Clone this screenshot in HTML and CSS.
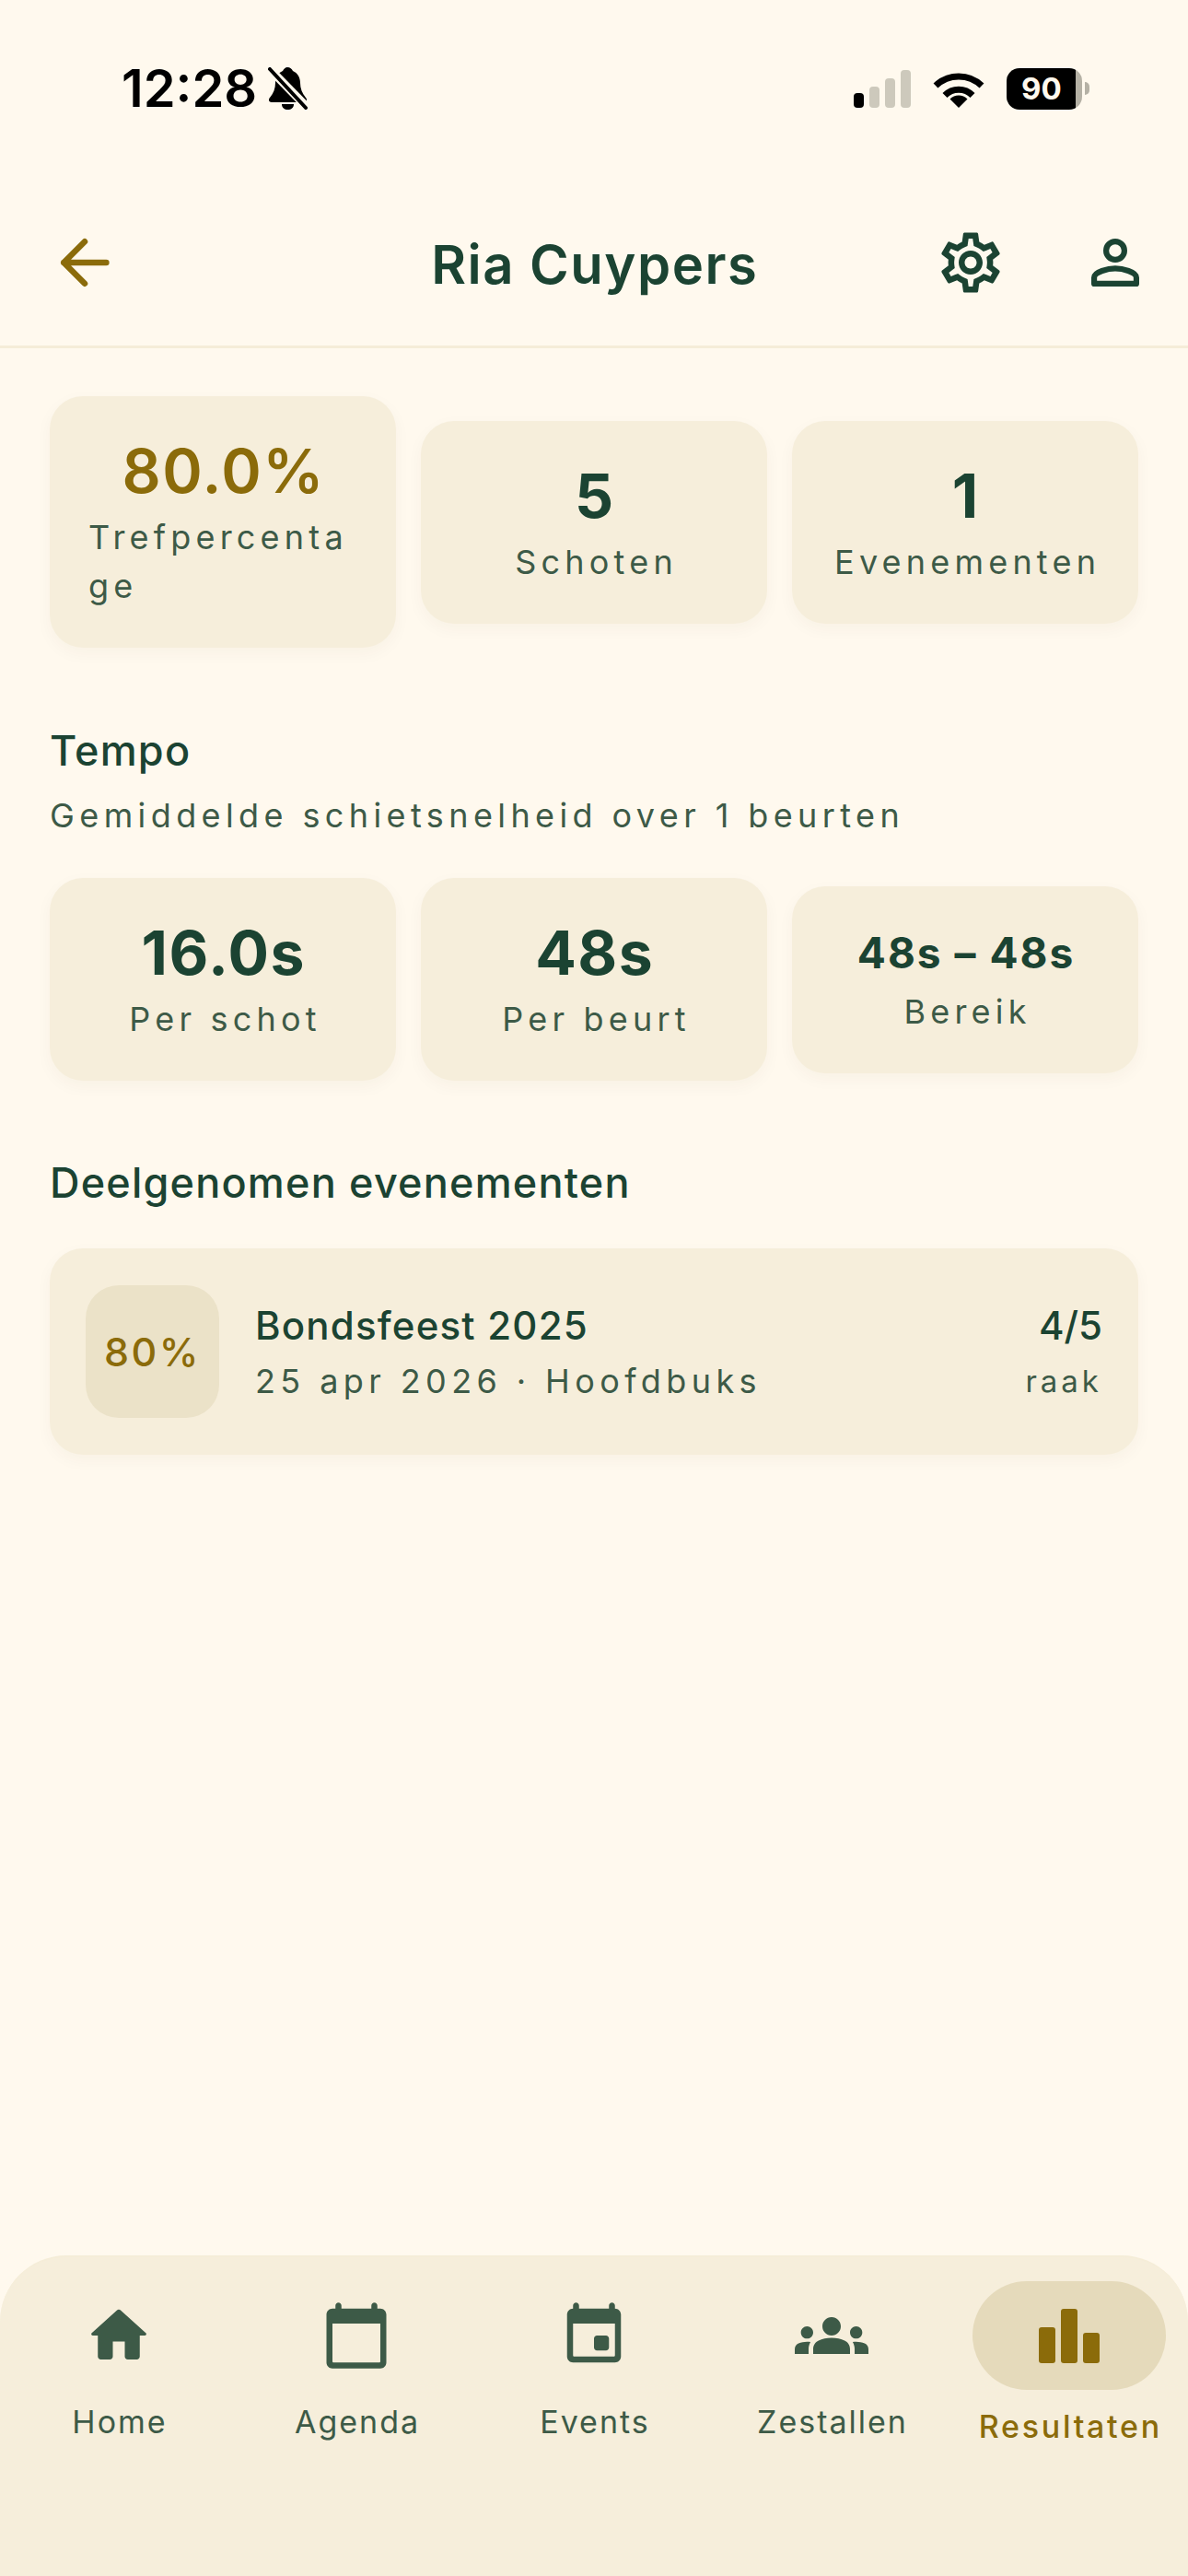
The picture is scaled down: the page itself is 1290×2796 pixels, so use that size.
FILE: index.html
```html
<html>
  <head>
    <meta name="viewport" content="width=device-width, initial-scale=1">
    <meta charset="UTF-8">
    <link rel="stylesheet" href="styles.css">
  </head>
  <body>
    <div class="screen">
      <div class="statusbar">
        <div class="status-left">
          <span class="time">12:28</span>
          <svg class="bell" width="43" height="46" viewBox="0 0 43 46">
            <path d="M21 0c3 0 5 2 6 4 5 2 8 7 8 13 0 6 2 11 6 16 2 2 1 5-2 5H4c-3 0-4-3-2-5 4-5 6-10 6-16 0-6 3-11 8-13 1-2 3-4 5-4z"/>
            <path d="M15 40h13c0 4-3 6-6.500 6S15 44 15 40z"/>
            <path class="bell-gap" d="M2 2l40 41"/>
            <path class="bell-slash" d="M2 2l39 42"/>
          </svg>
        </div>
        <div class="status-right">
          <div class="signal">
            <span class="bar on"></span>
            <span class="bar b2"></span>
            <span class="bar b3"></span>
            <span class="bar b4"></span>
          </div>
          <svg class="wifi" width="56" height="41" viewBox="0 0 56 41">
            <path class="arc" d="M3 17A36 36 0 0 1 53 17"/>
            <path class="arc" d="M13 27.500A21 21 0 0 1 43 27.500"/>
            <path d="M28 41L18.500 31.500A13.500 13.500 0 0 1 37.500 31.500z"/>
          </svg>
          <div class="battery">
            <div class="battery-body"><span>90</span></div>
            <div class="battery-nub"></div>
          </div>
        </div>
      </div>

      <div class="header">
        <svg class="icon back" viewBox="0 0 24 24"><path d="M19.200 12H5M12 5l-7 7 7 7"/></svg>
        <div class="title">Ria Cuypers</div>
        <div class="header-actions">
          <svg class="icon fill-dark" viewBox="0 0 24 24"><path d="M19.430 12.980c.04-.32.07-.64.07-.98 0-.34-.03-.66-.07-.98l2.110-1.650c.19-.15.24-.42.12-.64l-2-3.460c-.09-.16-.26-.25-.44-.25-.06 0-.12.01-.17.03l-2.490 1c-.52-.4-1.080-.73-1.690-.98l-.38-2.650C14.460 2.180 14.250 2 14 2h-4c-.25 0-.46.18-.49.42l-.38 2.650c-.61.25-1.170.59-1.690.98l-2.490-1c-.06-.02-.12-.03-.18-.03-.17 0-.34.09-.43.25l-2 3.460c-.13.22-.07.49.12.64l2.110 1.650c-.04.32-.07.65-.07.98 0 .33.03.66.07.98l-2.110 1.650c-.19.15-.24.42-.12.64l2 3.460c.09.16.26.25.44.25.06 0 .12-.01.17-.03l2.490-1c.52.4 1.080.73 1.690.98l.38 2.650c.03.24.24.42.49.42h4c.25 0 .46-.18.49-.42l.38-2.650c.61-.25 1.170-.59 1.690-.98l2.490 1c.06.02.12.03.18.03.17 0 .34-.09.43-.25l2-3.460c.12-.22.07-.49-.12-.64l-2.110-1.650zm-1.980-1.710c.04.31.05.52.05.73 0 .21-.02.43-.05.73l-.14 1.130.89.7 1.080.84-.7 1.210-1.270-.51-1.040-.42-.9.68c-.43.32-.84.56-1.250.73l-1.060.43-.16 1.130-.2 1.350h-1.400l-.19-1.350-.16-1.130-1.060-.43c-.43-.18-.83-.41-1.230-.71l-.91-.7-1.060.43-1.270.51-.7-1.210 1.080-.84.89-.7-.14-1.130c-.03-.31-.05-.54-.05-.74s.02-.43.05-.73l.14-1.130-.89-.7-1.080-.84.7-1.210 1.270.51 1.040.42.9-.68c.43-.32.84-.56 1.250-.73l1.060-.43.16-1.130.2-1.350h1.390l.19 1.350.16 1.130 1.060.43c.43.18.83.41 1.230.71l.91.7 1.060-.43 1.270-.51.7 1.210-1.070.85-.89.7.14 1.130zM12 8c-2.210 0-4 1.790-4 4s1.790 4 4 4 4-1.790 4-4-1.790-4-4-4zm0 6c-1.100 0-2-.9-2-2s.9-2 2-2 2 .9 2 2-.9 2-2 2z"/></svg>
          <svg class="icon person" viewBox="0 0 24 24">
            <circle cx="12" cy="8" r="3.050"/>
            <path d="M4.950 19.050V17c0-1.900 4.700-3.050 7.050-3.050s7.050 1.150 7.050 3.050v2.050z"/>
          </svg>
        </div>
      </div>

      <div class="content">
        <div class="stat-row">
          <div class="stat-card">
            <div class="stat-value gold">80.0%</div>
            <div class="stat-label">Trefpercentage</div>
          </div>
          <div class="stat-card">
            <div class="stat-value">5</div>
            <div class="stat-label">Schoten</div>
          </div>
          <div class="stat-card">
            <div class="stat-value">1</div>
            <div class="stat-label">Evenementen</div>
          </div>
        </div>

        <div class="section-title tempo-title">Tempo</div>
        <div class="section-sub">Gemiddelde schietsnelheid over 1 beurten</div>

        <div class="stat-row">
          <div class="stat-card">
            <div class="stat-value">16.0s</div>
            <div class="stat-label">Per schot</div>
          </div>
          <div class="stat-card">
            <div class="stat-value">48s</div>
            <div class="stat-label">Per beurt</div>
          </div>
          <div class="stat-card">
            <div class="stat-value small">48s – 48s</div>
            <div class="stat-label">Bereik</div>
          </div>
        </div>

        <div class="section-title events-title">Deelgenomen evenementen</div>

        <div class="event-card">
          <div class="event-badge">80%</div>
          <div class="event-info">
            <div class="event-name">Bondsfeest 2025</div>
            <div class="event-meta">25 apr 2026 · Hoofdbuks</div>
          </div>
          <div class="event-score">
            <div class="score-value">4/5</div>
            <div class="score-label">raak</div>
          </div>
        </div>
      </div>

      <div class="tabbar">
        <div class="tab">
          <div class="tab-icon">
            <svg width="78" height="78" viewBox="0 0 24 24"><path d="M10 19v-5h4v5c0 .55.45 1 1 1h3c.55 0 1-.45 1-1v-7h1.700c.46 0 .68-.57.33-.87L12.670 3.600c-.38-.34-.96-.34-1.340 0L2.970 11.130c-.34.3-.13.87.33.87H5v7c0 .55.45 1 1 1h3c.55 0 1-.45 1-1z"/></svg>
          </div>
          <div class="tab-label">Home</div>
        </div>
        <div class="tab">
          <div class="tab-icon">
            <svg width="78" height="78" viewBox="0 0 24 24"><path d="M20 3h-1V2c0-.55-.45-1-1-1s-1 .45-1 1v1H7V2c0-.55-.45-1-1-1s-1 .45-1 1v1H4c-1.100 0-2 .9-2 2v16c0 1.100.9 2 2 2h16c1.100 0 2-.9 2-2V5c0-1.100-.9-2-2-2zm-.4 18H4.400c-.25 0-.4-.15-.4-.4V8h16v12.600c0 .25-.15.4-.4.4z"/></svg>
          </div>
          <div class="tab-label">Agenda</div>
        </div>
        <div class="tab">
          <div class="tab-icon">
            <svg width="78" height="78" viewBox="0 0 24 24"><path d="M16 12h-3c-.55 0-1 .45-1 1v3c0 .55.45 1 1 1h3c.55 0 1-.45 1-1v-3c0-.55-.45-1-1-1zM17 2v1H7V2c0-.55-.45-1-1-1s-1 .45-1 1v1c-1.100 0-2 .9-2 2v14c0 1.100.9 2 2 2h14c1.100 0 2-.9 2-2V5c0-1.100-.9-2-2-2V2c0-.55-.45-1-1-1s-1 .45-1 1zm1.600 17H5.400c-.25 0-.4-.15-.4-.4V8h14v10.600c0 .25-.15.4-.4.4z"/></svg>
          </div>
          <div class="tab-label">Events</div>
        </div>
        <div class="tab">
          <div class="tab-icon">
            <svg width="80" height="80" viewBox="0 0 24 24"><path d="M4 13c1.100 0 2-.9 2-2 0-1.100-.9-2-2-2s-2 .9-2 2c0 1.100.9 2 2 2zm1.130 1.100C4.760 14.040 4.390 14 4 14c-.99 0-1.930.21-2.780.58C.48 14.900 0 15.620 0 16.430V18h4.500v-1.610c0-.83.23-1.610.63-2.290zM20 13c1.100 0 2-.9 2-2 0-1.100-.9-2-2-2s-2 .9-2 2c0 1.100.9 2 2 2zm4 3.430c0-.81-.48-1.530-1.220-1.850C21.930 14.210 20.990 14 20 14c-.39 0-.76.04-1.130.1.4.68.63 1.460.63 2.290V18H24v-1.570zM16.240 13.650c-1.170-.52-2.610-.9-4.240-.9-1.630 0-3.070.39-4.240.9C6.680 14.130 6 15.210 6 16.390V18h12v-1.610c0-1.180-.68-2.260-1.760-2.740zM12 12c1.660 0 3-1.340 3-3s-1.340-3-3-3-3 1.340-3 3 1.340 3 3 3z"/></svg>
          </div>
          <div class="tab-label">Zestallen</div>
        </div>
        <div class="tab active">
          <div class="tab-icon">
            <svg width="66" height="59" viewBox="0 0 66 59">
              <rect x="0" y="20" width="18" height="39" rx="3"/>
              <rect x="24" y="0" width="18" height="59" rx="3"/>
              <rect x="48" y="26" width="18" height="33" rx="3"/>
            </svg>
          </div>
          <div class="tab-label">Resultaten</div>
        </div>
      </div>
    </div>
  </body>
</html>
```

FILE: styles.css
```css
:root {
  --bg: #fff9ee;
  --card: #f6eedb;
  --line: #f5edd8;
  --dark: #1b4332;
  --soft: #3d5a47;
  --gold: #8b6b0a;
  --badge: #ebe2c8;
  --pill: #e5dabb;
}
* {
  box-sizing: border-box;
}
body {
  margin: 0;
  font-family: Inter, sans-serif;
  background: var(--bg);
  color: var(--dark);
}
.screen {
  width: 1290px;
  height: 2796px;
  display: flex;
  flex-direction: column;
  overflow: hidden;
}

/* status bar */
.statusbar {
  height: 192px;
  padding: 0 107px 0 132px;
  display: flex;
  justify-content: space-between;
  align-items: center;
  color: #000;
}
.status-left {
  display: flex;
  align-items: center;
  gap: 12px;
}
.time {
  font-size: 56px;
  font-weight: 600;
  line-height: 1;
}
.bell-gap {
  stroke: var(--bg);
  stroke-width: 9;
  fill: none;
}
.bell-slash {
  stroke: #000;
  stroke-width: 4;
  stroke-linecap: round;
  fill: none;
}
.status-right {
  display: flex;
  align-items: center;
}
.signal {
  display: flex;
  align-items: flex-end;
  gap: 6px;
  height: 41px;
  margin-top: 1px;
  margin-right: 24px;
}
.bar {
  width: 11px;
  height: 16px;
  border-radius: 4px;
  background: #000;
}
.b2 {
  height: 23px;
  background: #cdc9bc;
}
.b3 {
  height: 32px;
  background: #cdc9bc;
}
.b4 {
  height: 41px;
  background: #cdc9bc;
}
.wifi {
  margin-top: 1px;
  margin-right: 24px;
}
.wifi .arc {
  fill: none;
  stroke: #000;
  stroke-width: 7;
}
.battery {
  display: flex;
  align-items: center;
  gap: 3px;
}
.battery-body {
  width: 82px;
  height: 45px;
  border-radius: 14px;
  background: linear-gradient(90deg, #000 75px, #b5b1a5 75px);
  color: var(--bg);
  font-size: 33px;
  font-weight: 700;
  line-height: 45px;
  padding-left: 16px;
}
.battery-nub {
  width: 5px;
  height: 14px;
  border-radius: 0 5px 5px 0;
  background: #b5b1a5;
}

/* header */
.header {
  height: 186px;
  padding: 3px 40px 0;
  border-bottom: 3px solid var(--line);
  display: grid;
  grid-template-columns: 1fr auto 1fr;
  align-items: center;
}
.icon {
  width: 78px;
  height: 78px;
  display: block;
}
.back {
  margin-left: 13px;
  fill: none;
  stroke: var(--gold);
  stroke-width: 2;
  stroke-linecap: round;
  stroke-linejoin: round;
}
.title {
  font-size: 58px;
  font-weight: 600;
  letter-spacing: 1.5px;
  padding-top: 4px;
  margin-right: -1.500px;
  color: var(--dark);
}
.header-actions {
  display: flex;
  justify-content: flex-end;
  gap: 79px;
}
.fill-dark {
  fill: var(--dark);
}
.person {
  fill: none;
  stroke: var(--dark);
  stroke-width: 1.900;
  stroke-linejoin: round;
}

/* stats */
.content {
  flex: 1;
  padding: 52px 54px 0;
}
.stat-row {
  display: flex;
  align-items: center;
  gap: 27px;
}
.stat-card {
  flex: 1;
  min-width: 0;
  padding: 41px 42px 40px;
  border-radius: 36px;
  background: var(--card);
  box-shadow: 0 6px 18px rgba(80, 60, 10, 0.04);
  display: flex;
  flex-direction: column;
  align-items: center;
}
.stat-value {
  font-size: 66px;
  font-weight: 700;
  line-height: 80px;
  letter-spacing: 1.500px;
  margin-right: -1.500px;
  margin-bottom: 6px;
}
.stat-value.small {
  font-size: 46px;
  line-height: 63px;
  letter-spacing: 2px;
  margin-right: -2px;
}
.gold {
  color: var(--gold);
  font-weight: 600;
}
.stat-label {
  font-size: 36px;
  line-height: 53px;
  letter-spacing: 5.200px;
  margin-right: -5.200px;
  color: var(--soft);
  overflow-wrap: anywhere;
}

/* sections */
.section-title {
  font-size: 45px;
  font-weight: 550;
  line-height: 54px;
  letter-spacing: 1.200px;
  color: var(--dark);
}
.tempo-title {
  margin-top: 85px;
}
.section-sub {
  font-size: 36px;
  line-height: 46px;
  letter-spacing: 5.400px;
  color: var(--soft);
  margin-top: 20px;
  margin-bottom: 45px;
}
.events-title {
  margin-top: 84px;
  margin-bottom: 44px;
}

/* event row */
.event-card {
  display: flex;
  align-items: center;
  padding: 40px 39px;
  border-radius: 36px;
  background: var(--card);
  box-shadow: 0 6px 18px rgba(80, 60, 10, 0.04);
}
.event-badge {
  width: 145px;
  height: 144px;
  border-radius: 36px;
  background: var(--badge);
  color: var(--gold);
  font-size: 43px;
  font-weight: 550;
  letter-spacing: 2.500px;
  display: flex;
  align-items: center;
  justify-content: center;
}
.event-info {
  flex: 1;
  margin-left: 39px;
}
.event-name {
  font-size: 42px;
  font-weight: 550;
  line-height: 52px;
  letter-spacing: 1.200px;
}
.event-meta {
  font-size: 36px;
  line-height: 46px;
  letter-spacing: 5.400px;
  color: var(--soft);
  margin-top: 11px;
}
.event-score {
  text-align: right;
}
.score-value {
  font-size: 42px;
  font-weight: 550;
  line-height: 52px;
}
.score-label {
  font-size: 33px;
  line-height: 46px;
  letter-spacing: 4px;
  color: var(--soft);
  margin-top: 11px;
}

/* tab bar */
.tabbar {
  height: 348px;
  padding-top: 26px;
  border-top: 2px solid var(--line);
  border-radius: 72px 72px 0 0;
  background: var(--card);
  display: grid;
  grid-template-columns: repeat(5, 1fr);
}
.tab {
  display: flex;
  flex-direction: column;
  align-items: center;
  color: var(--soft);
}
.tab-icon {
  width: 210px;
  height: 118px;
  border-radius: 59px;
  display: flex;
  align-items: center;
  justify-content: center;
}
.tab-icon svg {
  fill: var(--soft);
}
.tab-label {
  font-size: 34px;
  line-height: 44px;
  letter-spacing: 2px;
  margin-right: -2px;
  margin-top: 13px;
}
.active .tab-icon {
  background: var(--pill);
}
.active .tab-icon svg {
  fill: var(--gold);
}
.active .tab-label {
  color: var(--gold);
  font-weight: 500;
  letter-spacing: 2.700px;
  margin-right: -2.700px;
  margin-top: 18px;
}
```
